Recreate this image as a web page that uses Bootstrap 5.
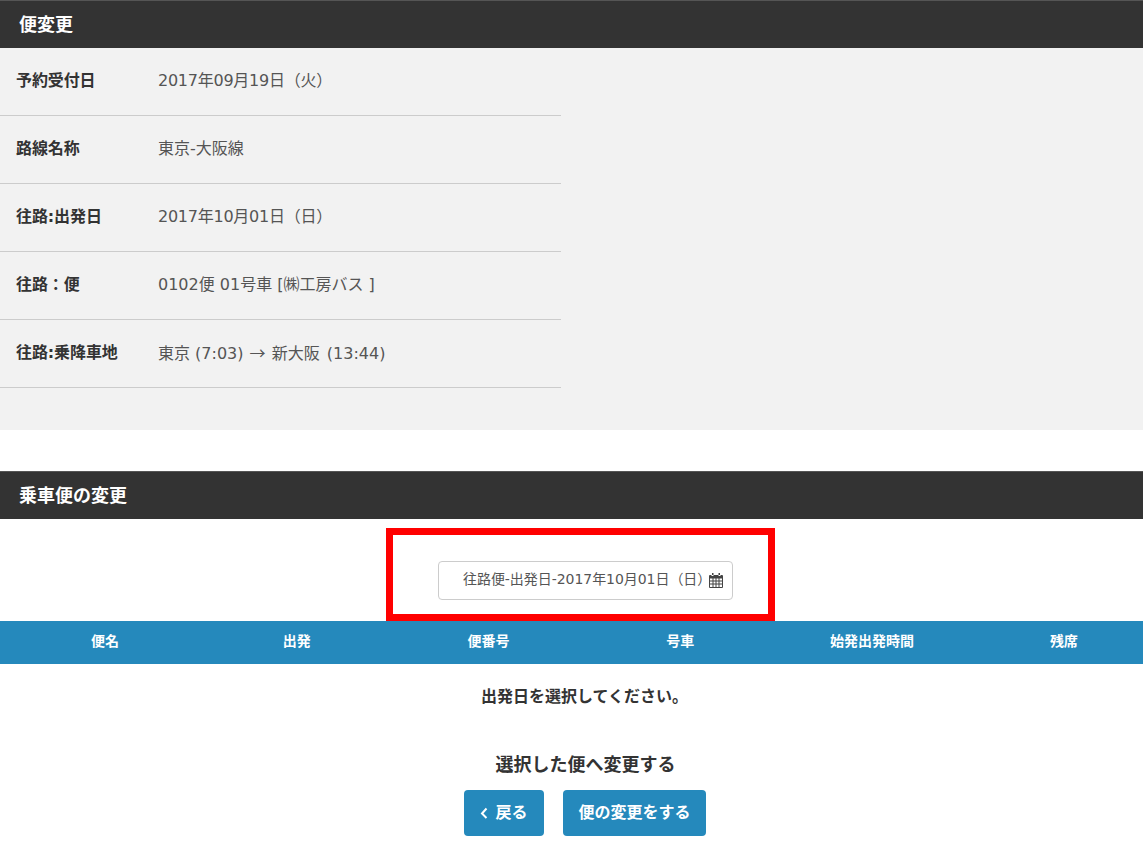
<!DOCTYPE html>
<html lang="ja">
<head>
<meta charset="utf-8">
<title>便変更</title>
<link href="https://cdn.jsdelivr.net/npm/bootstrap@5.3.0/dist/css/bootstrap.min.css" rel="stylesheet">
<style>
html,body{overflow:hidden;}
body{font-family:"DejaVu Sans","Noto Sans CJK JP",sans-serif;font-size:16px;color:#333;background:#fff;width:1143px;height:854px;}
.sec-head{height:48px;background:#333;color:#fff;font-weight:700;font-size:18px;line-height:44px;padding-left:19px;border-top:1px solid #555;margin:0;font-family:"Noto Sans CJK JP",sans-serif;}
.info-panel{background:#f2f2f2;height:382px;}
.info-row{width:561px;height:68px;border-bottom:1px solid #ccc;padding-left:16px;padding-bottom:2px;}
.info-label{width:142px;font-weight:700;color:#333;letter-spacing:-.1px;}
.info-value{color:#555;}
.date-text{letter-spacing:-.25px;}
.cjk-arrow{font-family:"Noto Sans CJK JP",sans-serif;margin:0 1px;}
.route-end{margin-left:2px;}
.gap-block{height:41px;}
.red-frame{width:389px;height:93px;margin:9px 0 0 386px;border:7px solid #f00;padding:26px 0 0 45px;}
.date-field{width:295px;height:39px;border:1px solid #ccc;border-radius:4px;padding-left:24px;padding-right:4px;font-size:14px;color:#555;background:#fff;}
.date-field span{padding-bottom:2px;letter-spacing:-.05px;}
.date-field svg{margin-left:-2px;}
.head-grid{display:grid;grid-template-columns:repeat(6,191.8px);height:43px;background:#2589bc;color:#fff;font-weight:700;font-size:14px;padding-left:9px;padding-bottom:2px;align-items:center;text-align:center;overflow:hidden;}
.msg{font-weight:700;text-align:center;padding-left:26px;margin-top:21px;line-height:24px;}
.msg2{font-weight:700;font-size:18px;text-align:center;padding-left:28px;margin-top:44px;line-height:24px;}
.btn-row{margin:13px 0 0 464px;gap:19px;}
.btn-blue{background:#2589bc;color:#fff;font-weight:700;font-size:16px;height:46px;border:0;border-radius:4px;padding:0 0 1px;display:flex;align-items:center;justify-content:center;}
.btn-blue:hover{background:#2589bc;color:#fff;}
.btn-back{width:80px;gap:7px;}
.btn-next{width:143px;}
</style>
</head>
<body>
<h2 class="sec-head">便変更</h2>
<div class="info-panel">
  <div class="info-row d-flex align-items-center"><div class="info-label">予約受付日</div><div class="info-value date-text">2017年09月19日（火）</div></div>
  <div class="info-row d-flex align-items-center"><div class="info-label">路線名称</div><div class="info-value">東京-大阪線</div></div>
  <div class="info-row d-flex align-items-center"><div class="info-label">往路:出発日</div><div class="info-value date-text">2017年10月01日（日）</div></div>
  <div class="info-row d-flex align-items-center"><div class="info-label">往路：便</div><div class="info-value">0102便 01号車 [㈱工房バス ]</div></div>
  <div class="info-row d-flex align-items-center"><div class="info-label">往路:乗降車地</div><div class="info-value">東京 (7:03) <span class="cjk-arrow">→</span> 新大阪 <span class="route-end">(13:44)</span></div></div>
</div>
<div class="gap-block"></div>
<h2 class="sec-head">乗車便の変更</h2>
<div class="red-frame">
  <div class="date-field d-flex align-items-center">
    <span>往路便-出発日-2017年10月01日（日）</span>
    <svg width="14" height="15" viewBox="0 0 14 15" aria-hidden="true"><path fill="#444" fill-rule="evenodd" d="M3 0h1.500v2H3zM9.500 0H11v2H9.500zM1 2h1.500v1h2V2h5v1h2V2H13a1 1 0 0 1 1 1v11a1 1 0 0 1-1 1H1a1 1 0 0 1-1-1V3a1 1 0 0 1 1-1zM1 5.500v2h2.500v-2zM4.500 5.500v2h2v-2zM7.500 5.500v2h2v-2zM10.500 5.500v2H13v-2zM1 8.500v2h2.500v-2zM4.500 8.500v2h2v-2zM7.500 8.500v2h2v-2zM10.500 8.500v2H13v-2zM1 11.500V14h2.500v-2.500zM4.500 11.500V14h2v-2.500zM7.500 11.500V14h2v-2.500zM10.500 11.500V14H13v-2.500z"/></svg>
  </div>
</div>
<div class="head-grid"><div>便名</div><div>出発</div><div>便番号</div><div>号車</div><div>始発出発時間</div><div>残席</div></div>
<p class="msg mb-0">出発日を選択してください。</p>
<p class="msg2 mb-0">選択した便へ変更する</p>
<div class="btn-row d-flex">
  <a class="btn btn-blue btn-back" href="#"><svg width="8" height="12" viewBox="0 0 8 12" aria-hidden="true"><path d="M6.500 1.500 2 6.500l4.500 4.500" fill="none" stroke="#fff" stroke-width="2"/></svg><span>戻る</span></a>
  <a class="btn btn-blue btn-next" href="#">便の変更をする</a>
</div>
<script src="https://cdn.jsdelivr.net/npm/bootstrap@5.3.0/dist/js/bootstrap.bundle.min.js"></script>
</body>
</html>
